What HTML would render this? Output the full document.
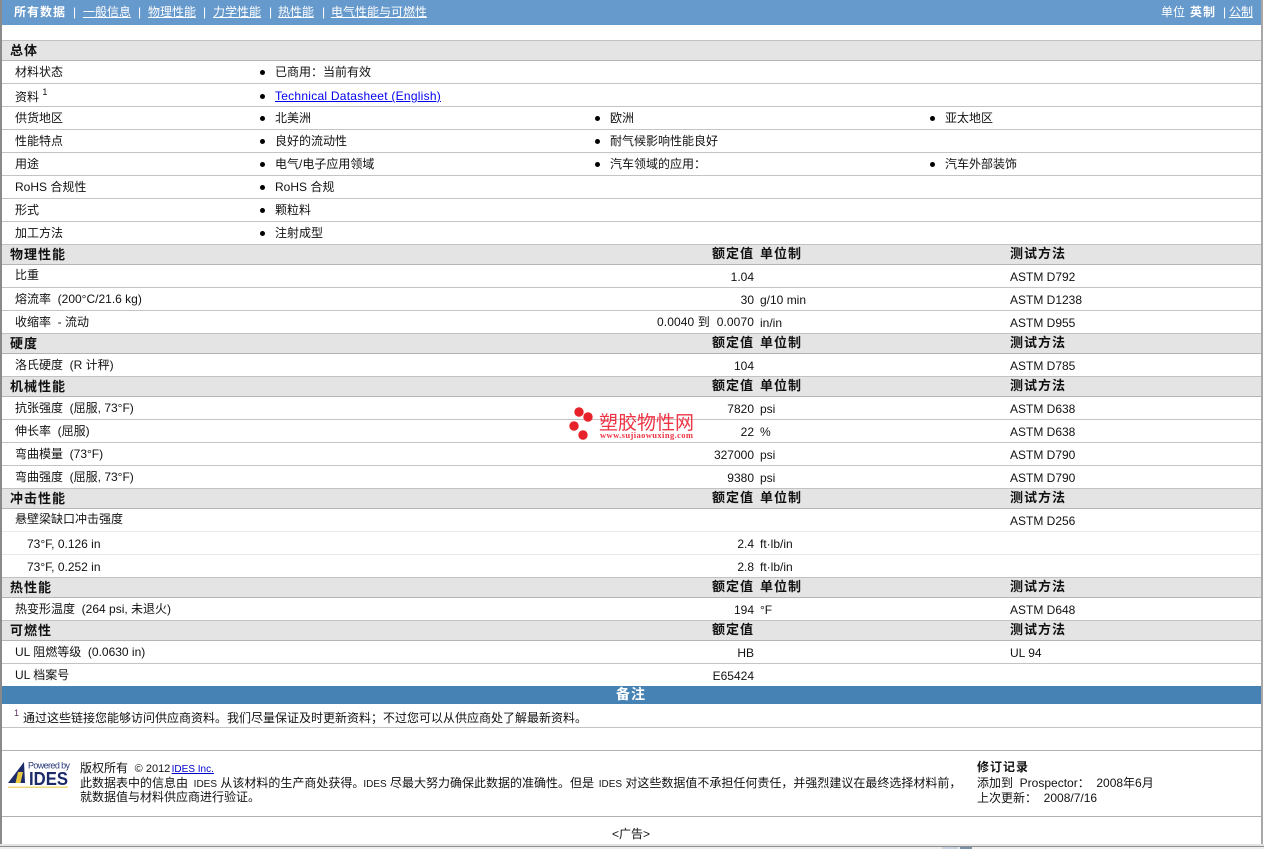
<!DOCTYPE html>
<html lang="zh"><head><meta charset="utf-8"><title>数据表</title>
<style>
html,body{margin:0;padding:0;background:#fff}
body{position:relative;width:1264px;height:849px;overflow:hidden;font:12px/14px "Liberation Sans","WenQuanYi Zen Hei","Noto Sans CJK SC",sans-serif;color:#111}
.t{position:absolute;white-space:nowrap;height:14px}
.r{position:absolute;white-space:nowrap;height:14px;right:510px;text-align:right}
.b{font-weight:bold;font-size:13px;letter-spacing:1px;margin-top:1px}
.s{position:absolute;left:2px;width:1259px;background:#e4e4e4;border-top:1px solid #c2c2c2;border-bottom:1px solid #b4b4b4;box-sizing:border-box}
.l{position:absolute;left:2px;width:1259px;height:1px;background:#c4c4c4}
.ll{position:absolute;left:2px;width:1259px;height:1px;background:#eaeaea}
.d{position:absolute;width:5px;height:5px;border-radius:50%;background:#000}
.n{position:absolute;top:5px;color:#fff;white-space:nowrap;text-decoration:underline;height:14px}
.p{position:absolute;top:5px;color:#fff;height:14px}
.f{font-size:10px}
</style></head><body>
<div style="position:absolute;left:0;top:0;width:1261px;height:25px;background:#6699cc"></div>
<div style="position:absolute;left:0;top:0;width:2px;height:844px;background:#8a8a8a"></div>
<div style="position:absolute;left:1261px;top:0;width:2px;height:844px;background:#a8a8a8"></div>
<div style="position:absolute;left:0;top:844px;width:1264px;height:2px;background:#e4e4e4"></div>
<div style="position:absolute;left:0;top:846px;width:1264px;height:1px;background:#8f8f8f"></div>
<div style="position:absolute;left:0;top:847px;width:1264px;height:2px;background:#eeeeee"></div>
<div style="position:absolute;left:942px;top:847px;width:16px;height:2px;background:#c8d4e4"></div>
<div style="position:absolute;left:960px;top:847px;width:12px;height:2px;background:#7890a8"></div>

<div class="t b" style="left:14px;top:4px;color:#fff;font-size:12px">所有数据</div>
<div class="p" style="left:73px">|</div><div class="n" style="left:83px">一般信息</div>
<div class="p" style="left:138px">|</div><div class="n" style="left:148px">物理性能</div>
<div class="p" style="left:203px">|</div><div class="n" style="left:213px">力学性能</div>
<div class="p" style="left:269px">|</div><div class="n" style="left:278px">热性能</div>
<div class="p" style="left:322px">|</div><div class="n" style="left:331px">电气性能与可燃性</div>
<div class="p" style="left:1161px">单位</div>
<div class="t b" style="left:1190px;top:4px;color:#fff;font-size:12px">英制</div>
<div class="p" style="left:1223px">|</div><div class="n" style="left:1229px">公制</div>

<div class="s" style="top:40px;height:21px"></div>
<div class="l" style="top:83px"></div><div class="l" style="top:106px"></div><div class="l" style="top:129px"></div><div class="l" style="top:152px"></div><div class="l" style="top:175px"></div><div class="l" style="top:198px"></div><div class="l" style="top:221px"></div>
<div class="s" style="top:244px;height:21px"></div>
<div class="l" style="top:287px"></div><div class="l" style="top:310px"></div>
<div class="s" style="top:333px;height:21px"></div>
<div class="s" style="top:376px;height:21px"></div>
<div class="l" style="top:419px"></div><div class="l" style="top:442px"></div><div class="l" style="top:465px"></div>
<div class="s" style="top:488px;height:21px"></div>
<div class="ll" style="top:531px"></div><div class="ll" style="top:554px"></div>
<div class="s" style="top:577px;height:21px"></div>
<div class="s" style="top:620px;height:21px"></div>
<div class="l" style="top:663px"></div>
<div style="position:absolute;left:2px;top:686px;width:1259px;height:18px;background:#4682b4"></div>
<div class="l" style="top:727px"></div><div class="l" style="top:750px;background:#b0b0b0"></div><div class="l" style="top:816px;background:#b0b0b0"></div>

<div class="t b" style="left:10px;top:43px">总体</div>
<div class="t" style="left:15px;top:65px">材料状态</div><div class="d" style="left:260px;top:70px"></div><div class="t" style="left:275px;top:65px">已商用：当前有效</div>
<div class="t" style="left:15px;top:90px">资料 <sup style="font-size:9px;line-height:0;position:relative;top:-1px">1</sup></div><div class="d" style="left:260px;top:94px"></div><div class="t" style="left:275px;top:89px"><span style="color:#0000ee;text-decoration:underline;letter-spacing:.25px">Technical Datasheet (English)</span></div>
<div class="t" style="left:15px;top:111px">供货地区</div><div class="d" style="left:260px;top:116px"></div><div class="t" style="left:275px;top:111px">北美洲</div><div class="d" style="left:595px;top:116px"></div><div class="t" style="left:610px;top:111px">欧洲</div><div class="d" style="left:930px;top:116px"></div><div class="t" style="left:945px;top:111px">亚太地区</div>
<div class="t" style="left:15px;top:134px">性能特点</div><div class="d" style="left:260px;top:139px"></div><div class="t" style="left:275px;top:134px">良好的流动性</div><div class="d" style="left:595px;top:139px"></div><div class="t" style="left:610px;top:134px">耐气候影响性能良好</div>
<div class="t" style="left:15px;top:157px">用途</div><div class="d" style="left:260px;top:162px"></div><div class="t" style="left:275px;top:157px">电气/电子应用领域</div><div class="d" style="left:595px;top:162px"></div><div class="t" style="left:610px;top:157px">汽车领域的应用：</div><div class="d" style="left:930px;top:162px"></div><div class="t" style="left:945px;top:157px">汽车外部装饰</div>
<div class="t" style="left:15px;top:180px">RoHS 合规性</div><div class="d" style="left:260px;top:185px"></div><div class="t" style="left:275px;top:180px">RoHS 合规</div>
<div class="t" style="left:15px;top:203px">形式</div><div class="d" style="left:260px;top:208px"></div><div class="t" style="left:275px;top:203px">颗粒料</div>
<div class="t" style="left:15px;top:226px">加工方法</div><div class="d" style="left:260px;top:231px"></div><div class="t" style="left:275px;top:226px">注射成型</div>

<div class="t b" style="left:10px;top:247px">物理性能</div><div class="r b" style="top:246px">额定值</div><div class="t b" style="left:760px;top:246px">单位制</div><div class="t b" style="left:1010px;top:246px">测试方法</div>
<div class="t" style="left:15px;top:268px">比重</div><div class="r" style="top:270px">1.04</div><div class="t" style="left:1010px;top:270px">ASTM D792</div>
<div class="t" style="left:15px;top:292px">熔流率&nbsp; (200°C/21.6 kg)</div><div class="r" style="top:293px">30</div><div class="t" style="left:760px;top:293px">g/10 min</div><div class="t" style="left:1010px;top:293px">ASTM D1238</div>
<div class="t" style="left:15px;top:315px">收缩率&nbsp; - 流动</div><div class="r" style="top:315px;letter-spacing:.1px">0.0040 到&nbsp; 0.0070</div><div class="t" style="left:760px;top:316px">in/in</div><div class="t" style="left:1010px;top:316px">ASTM D955</div>

<div class="t b" style="left:10px;top:336px">硬度</div><div class="r b" style="top:335px">额定值</div><div class="t b" style="left:760px;top:335px">单位制</div><div class="t b" style="left:1010px;top:335px">测试方法</div>
<div class="t" style="left:15px;top:358px">洛氏硬度&nbsp; (R 计秤)</div><div class="r" style="top:359px">104</div><div class="t" style="left:1010px;top:359px">ASTM D785</div>

<div class="t b" style="left:10px;top:379px">机械性能</div><div class="r b" style="top:378px">额定值</div><div class="t b" style="left:760px;top:378px">单位制</div><div class="t b" style="left:1010px;top:378px">测试方法</div>
<div class="t" style="left:15px;top:401px">抗张强度&nbsp; (屈服, 73°F)</div><div class="r" style="top:402px">7820</div><div class="t" style="left:760px;top:402px">psi</div><div class="t" style="left:1010px;top:402px">ASTM D638</div>
<div class="t" style="left:15px;top:424px">伸长率&nbsp; (屈服)</div><div class="r" style="top:425px">22</div><div class="t" style="left:760px;top:425px">%</div><div class="t" style="left:1010px;top:425px">ASTM D638</div>
<div class="t" style="left:15px;top:447px">弯曲模量&nbsp; (73°F)</div><div class="r" style="top:448px">327000</div><div class="t" style="left:760px;top:448px">psi</div><div class="t" style="left:1010px;top:448px">ASTM D790</div>
<div class="t" style="left:15px;top:470px">弯曲强度&nbsp; (屈服, 73°F)</div><div class="r" style="top:471px">9380</div><div class="t" style="left:760px;top:471px">psi</div><div class="t" style="left:1010px;top:471px">ASTM D790</div>

<div class="t b" style="left:10px;top:491px">冲击性能</div><div class="r b" style="top:490px">额定值</div><div class="t b" style="left:760px;top:490px">单位制</div><div class="t b" style="left:1010px;top:490px">测试方法</div>
<div class="t" style="left:15px;top:512px">悬壁梁缺口冲击强度</div><div class="t" style="left:1010px;top:514px">ASTM D256</div>
<div class="t" style="left:27px;top:537px">73°F, 0.126 in</div><div class="r" style="top:537px">2.4</div><div class="t" style="left:760px;top:537px">ft·lb/in</div>
<div class="t" style="left:27px;top:560px">73°F, 0.252 in</div><div class="r" style="top:560px">2.8</div><div class="t" style="left:760px;top:560px">ft·lb/in</div>

<div class="t b" style="left:10px;top:580px">热性能</div><div class="r b" style="top:579px">额定值</div><div class="t b" style="left:760px;top:579px">单位制</div><div class="t b" style="left:1010px;top:579px">测试方法</div>
<div class="t" style="left:15px;top:602px">热变形温度&nbsp; (264 psi, 未退火)</div><div class="r" style="top:603px">194</div><div class="t" style="left:760px;top:603px">°F</div><div class="t" style="left:1010px;top:603px">ASTM D648</div>

<div class="t b" style="left:10px;top:623px">可燃性</div><div class="r b" style="top:622px">额定值</div><div class="t b" style="left:1010px;top:622px">测试方法</div>
<div class="t" style="left:15px;top:645px">UL 阻燃等级&nbsp; (0.0630 in)</div><div class="r" style="top:646px">HB</div><div class="t" style="left:1010px;top:646px">UL 94</div>
<div class="t" style="left:15px;top:668px">UL 档案号</div><div class="r" style="top:669px">E65424</div>

<div class="t" style="left:616px;top:687px;color:#fff;font-size:14px;font-weight:bold;letter-spacing:1px">备注</div>
<div class="t" style="left:14px;top:706px;font-size:9px;color:#603060">1</div>
<div class="t" style="left:23px;top:711px">通过这些链接您能够访问供应商资料。我们尽量保证及时更新资料；不过您可以从供应商处了解最新资料。</div>

<svg style="position:absolute;left:6px;top:760px" width="66" height="30" viewBox="0 0 66 30">
<polygon points="2,23 18,2 19,23" fill="#1c2a6a"/>
<polygon points="12,12 17,12 14.5,23 9.5,23" fill="#e8c840"/>
<rect x="2" y="26.5" width="60" height="1.5" fill="#eed878"/>
<text x="22" y="8.5" font-family="Liberation Sans" font-size="9" fill="#2a3a7a" textLength="42">Powered by</text>
<text x="23" y="25" font-family="Liberation Sans" font-size="18" font-weight="bold" fill="#1c2a6a" textLength="39" lengthAdjust="spacingAndGlyphs">IDES</text>
</svg>

<div class="t" style="left:80px;top:761px">版权所有&nbsp; <span style="font-size:11px">© 2012</span> <span class="f" style="color:#0000cc;text-decoration:underline;margin-left:-2px">IDES Inc.</span></div>
<div class="t" style="left:80px;top:776px">此数据表中的信息由&nbsp; <span class="f" style="margin-left:-1px">IDES</span> 从该材料的生产商处获得。<span class="f" style="margin-left:-1px">IDES</span> 尽最大努力确保此数据的准确性。但是&nbsp; <span class="f" style="margin-left:-2px">IDES</span> 对这些数据值不承担任何责任，并强烈建议在最终选择材料前，</div>
<div class="t" style="left:80px;top:790px">就数据值与材料供应商进行验证。</div>
<div class="t b" style="left:977px;top:759px;font-size:12px">修订记录</div>
<div class="t" style="left:977px;top:776px">添加到&nbsp; Prospector：&nbsp; 2008年6月</div>
<div class="t" style="left:977px;top:791px">上次更新：&nbsp; 2008/7/16</div>
<div class="t" style="left:612px;top:827px">&lt;广告&gt;</div>

<svg style="position:absolute;left:565px;top:405px" width="135" height="40" viewBox="0 0 135 40">
<circle cx="14" cy="7" r="4.7" fill="#e8222a"/><circle cx="23" cy="12" r="4.7" fill="#e8222a"/><circle cx="9" cy="21" r="4.7" fill="#e8222a"/><circle cx="18" cy="30" r="4.7" fill="#e8222a"/>
<text x="34" y="24" font-family="WenQuanYi Zen Hei,Noto Sans CJK SC,sans-serif" font-size="19" fill="#ee3344">塑胶物性网</text>
<text x="35" y="33" font-family="Liberation Serif" font-size="8.5" font-weight="bold" fill="#ee3344" textLength="93">www.sujiaowuxing.com</text>
</svg>
</body></html>
